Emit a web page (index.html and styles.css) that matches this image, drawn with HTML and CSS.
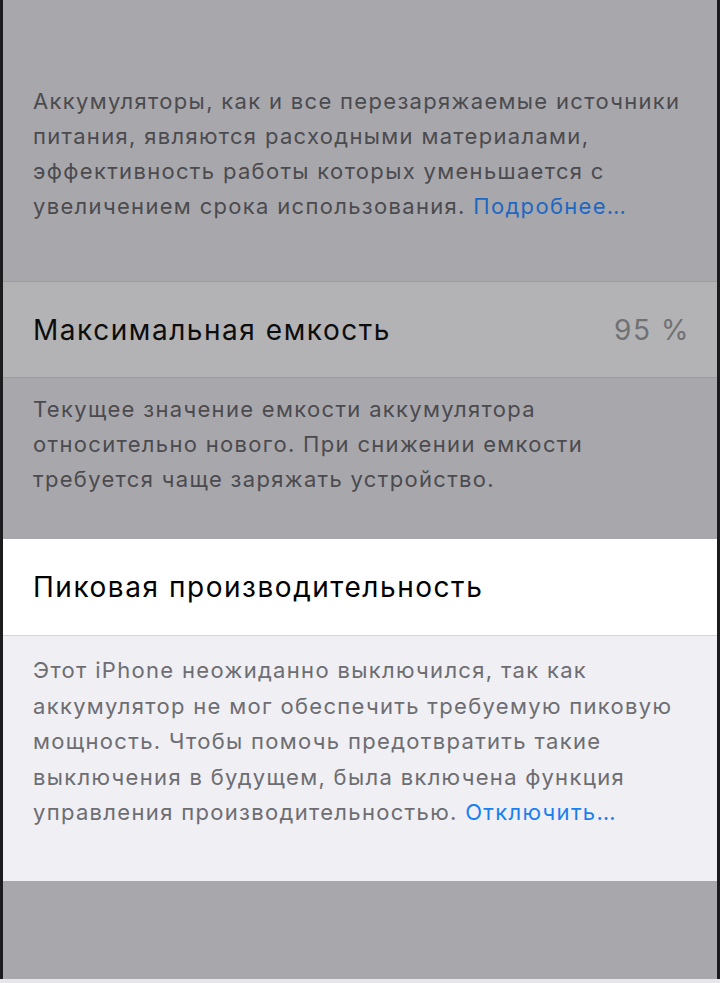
FILE: index.html
```html
<!DOCTYPE html>
<html lang="ru">

<head>
    <meta charset="UTF-8">
    <title>Состояние аккумулятора</title>
    <link rel="stylesheet" href="styles.css">
</head>

<body>
    <div class="screen">
        <!-- Dimmed part above the highlighted row -->
        <div class="dim">
            <p class="footer footer-top">
                Аккумуляторы, как и все перезаряжаемые источники<br>
                питания, являются расходными материалами,<br>
                эффективность работы которых уменьшается с<br>
                увеличением срока использования. <a href="#">Подробнее…</a>
            </p>

            <div class="cell cell-dim">
                <span class="cell-title">Максимальная емкость</span>
                <span class="cell-value">95 %</span>
            </div>

            <p class="footer footer-mid">
                Текущее значение емкости аккумулятора<br>
                относительно нового. При снижении емкости<br>
                требуется чаще заряжать устройство.
            </p>
        </div>

        <!-- Highlighted group -->
        <div class="cell cell-white">
            <span class="cell-title">Пиковая производительность</span>
        </div>

        <p class="footer footer-light">
            Этот iPhone неожиданно выключился, так как<br>
            аккумулятор не мог обеспечить требуемую пиковую<br>
            мощность. Чтобы помочь предотвратить такие<br>
            выключения в будущем, была включена функция<br>
            управления производительностью. <a href="#">Отключить…</a>
        </p>

        <div class="dim dim-bottom"></div>
    </div>
    <div class="bottom-strip"></div>
</body>

</html>
```

FILE: styles.css
```css
/* Phone screen with a dark bezel on the sides */
body {
    margin: 0;
    padding: 0;
    background-color: #1c1c1e;
    font-family: Inter, "Noto Sans", sans-serif;
}

.screen {
    margin: 0 3px;
    display: flex;
    flex-direction: column;
    background-color: #efeff4;
}

/* Dimmed overlay area */
.dim {
    background-color: #a8a7ac;
}

.dim-bottom {
    height: 98px;
}

.footer {
    margin: 0;
    padding: 0 10px 0 30px;
    font-size: 22px;
    line-height: 35px;
    letter-spacing: 0.06em;
    color: #6d6d72;
    white-space: nowrap;
}

.footer a {
    color: #1a80f0;
    text-decoration: none;
}

.footer-top {
    padding-top: 84px;
    padding-bottom: 57px;
    color: #4b4b4f;
}

.footer-top a {
    color: #1d68c2;
}

.footer-mid {
    padding-top: 14px;
    padding-bottom: 42px;
    color: #4b4b4f;
}

.footer-light {
    padding-top: 17px;
    padding-bottom: 50px;
    line-height: 35.5px;
}

/* Table cells */
.cell {
    display: flex;
    justify-content: space-between;
    align-items: center;
    height: 95px;
    padding: 0 27px 0 30px;
    font-size: 28px;
    letter-spacing: 0.055em;
    color: #000;
}

.cell-dim {
    background-color: #b3b3b5;
    border-top: 1px solid #9d9ca1;
    border-bottom: 1px solid #9d9ca1;
    color: #0d0d0d;
}

.cell-value {
    color: #717173;
}

.cell-white {
    height: 96px;
    background-color: #fff;
    border-bottom: 1px solid #d3d3d8;
}

.bottom-strip {
    height: 6px;
    background-color: #e6e6e8;
}
```
